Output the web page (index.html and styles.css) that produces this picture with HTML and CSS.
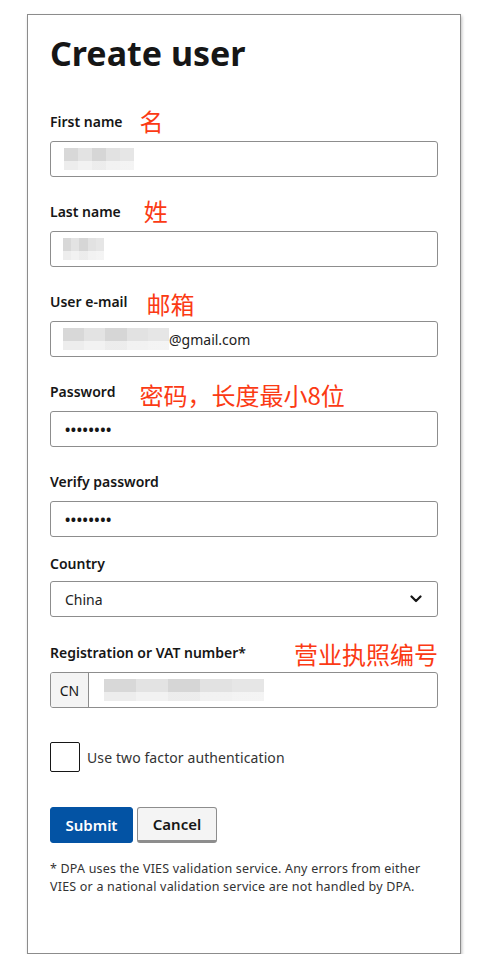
FILE: index.html
```html
<!DOCTYPE html>
<html lang="en">
<head>
<meta charset="utf-8">
<title>Create user</title>
<link rel="stylesheet" href="styles.css">
</head>
<body>
<div class="card">
  <h1 class="title">Create user</h1>

  <div class="field f-first">
    <div class="label-row"><span class="label">First name</span><span class="note n-first">名</span></div>
    <div class="input"><span class="blur b-first"></span></div>
  </div>

  <div class="field">
    <div class="label-row"><span class="label">Last name</span><span class="note n-last">姓</span></div>
    <div class="input"><span class="blur b-last"></span></div>
  </div>

  <div class="field">
    <div class="label-row"><span class="label">User e-mail</span><span class="note n-mail">邮箱</span></div>
    <div class="input"><span class="blur b-mail"></span><span class="value">@gmail.com</span></div>
  </div>

  <div class="field">
    <div class="label-row"><span class="label">Password</span><span class="note n-pass">密码，长度最小8位</span></div>
    <div class="input"><span class="dots">••••••••</span></div>
  </div>

  <div class="field">
    <div class="label-row"><span class="label">Verify password</span></div>
    <div class="input"><span class="dots">••••••••</span></div>
  </div>

  <div class="field f-country">
    <div class="label-row"><span class="label">Country</span></div>
    <div class="input select"><span class="value">China</span>
      <svg class="chev" width="12" height="8" viewBox="0 0 12 8"><path d="M1.5 1.5 L6 6 L10.5 1.5" fill="none" stroke="#161616" stroke-width="2.2" stroke-linecap="round" stroke-linejoin="round"/></svg>
    </div>
  </div>

  <div class="field f-reg">
    <div class="label-row spread"><span class="label">Registration or VAT number*</span><span class="note n-reg">营业执照编号</span></div>
    <div class="input group"><span class="prefix">CN</span><span class="blur b-reg"></span></div>
  </div>

  <label class="check-row">
    <span class="checkbox"></span>
    <span class="check-label">Use two factor authentication</span>
  </label>

  <div class="buttons">
    <button class="btn primary">Submit</button>
    <button class="btn secondary">Cancel</button>
  </div>

  <p class="footnote">* DPA uses the VIES validation service. Any errors from either VIES or a national validation service are not handled by DPA.</p>
</div>
</body>
</html>
```

FILE: styles.css
```css
* { box-sizing: border-box; }
html, body { margin: 0; padding: 0; background: #ffffff; }
body {
  font-family: "Noto Sans", "Liberation Sans", "Noto Sans CJK SC", sans-serif;
  color: #161616;
}
.card {
  margin: 14px 0 0 27px;
  width: 434px;
  height: 940px;
  border: 1px solid #8c8c8c;
  box-shadow: 1px 2px 3px rgba(0,0,0,0.25);
  padding: 0 22px;
  display: flex;
  flex-direction: column;
}
.title {
  margin: 16px 0 0 0;
  font-size: 34px;
  line-height: 44px;
  font-weight: 700;
  letter-spacing: 0;
  color: #161616;
}
.field { display: flex; flex-direction: column; margin-top: 24px; }
.f-first { margin-top: 36px; }
.f-country { margin-top: 16px; }
.f-reg { margin-top: 25px; }
.label-row {
  display: flex;
  align-items: center;
  height: 20px;
  margin-bottom: 10px;
}
.f-country .label-row { margin-bottom: 8px; }
.label-row.spread { justify-content: space-between; }
.label {
  font-size: 14px;
  font-weight: 600;
  color: #161616;
  white-space: nowrap;
}
.note {
  font-family: "Noto Sans CJK SC", sans-serif;
  font-size: 24px;
  line-height: 24px;
  color: #fb3a14;
  white-space: nowrap;
}
.n-first { margin-left: 17px; }
.n-last { margin-left: 23px; }
.n-mail { margin-left: 19px; margin-top: 6px; }
.n-pass { margin-left: 24px; margin-top: 8px; }
.n-reg { margin-top: 4px; }
.input {
  height: 36px;
  border: 1px solid #8d8d8d;
  border-radius: 3px;
  display: flex;
  align-items: center;
  padding: 0 12px;
  font-size: 14px;
  color: #161616;
  background: #fff;
}
.value { font-size: 14px; color: #222; }
.blur {
  display: block;
  height: 22px;
  background:
    linear-gradient(180deg, rgba(255,255,255,0) 60%, rgba(255,255,255,0.55) 60%),
    linear-gradient(90deg, #d8d8d8 0 20%, #e3e3e3 20% 40%, #d6d6d6 40% 60%, #e2e2e2 60% 80%, #e6e6e6 80% 100%);
}
.b-first { width: 70px; margin-left: 1px; }
.b-last { width: 41px; margin-left: 0; }
.b-mail { width: 106px; margin-left: 0; }
.dots { font-size: 14px; letter-spacing: 0.6px; font-weight: 700; color: #161616; padding-left: 2px; }
.select { justify-content: space-between; padding-left: 14px; padding-right: 15px; }
.chev { display: block; }
.group { padding: 0; overflow: hidden; }
.prefix {
  width: 38px;
  height: 100%;
  background: #f4f4f4;
  border-right: 1px solid #8d8d8d;
  display: flex;
  align-items: center;
  justify-content: center;
  font-size: 14px;
  color: #161616;
}
.b-reg { width: 160px; margin-left: 15px; }
.check-row {
  display: flex;
  align-items: center;
  margin-top: 34px;
  gap: 7px;
}
.checkbox {
  width: 30px;
  height: 30px;
  border: 1px solid #161616;
  border-radius: 2px;
  background: #fff;
}
.check-label { font-size: 14px; color: #333; letter-spacing: 0.1px; }
.buttons { display: flex; gap: 4px; margin-top: 35px; }
.btn {
  height: 36px;
  font-family: inherit;
  font-size: 15px;
  font-weight: 600;
  border-radius: 3px;
  padding: 0;
  cursor: pointer;
}
.primary {
  width: 83px;
  background: #0353a4;
  border: 1px solid #0353a4;
  color: #fff;
}
.secondary {
  width: 80px;
  background: #f4f4f4;
  border: 1px solid #8d8d8d;
  border-bottom: 3px solid #8d8d8d;
  color: #161616;
}
.footnote {
  margin: 17px 0 0 0;
  max-width: 376px;
  font-size: 12.5px;
  line-height: 18px;
  color: #333;
  letter-spacing: 0.2px;
}
```
